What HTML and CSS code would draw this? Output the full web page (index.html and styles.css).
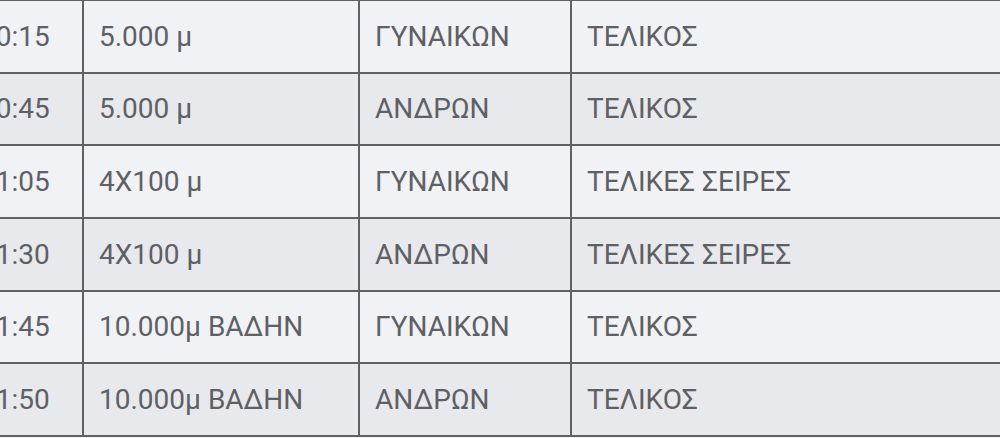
FILE: index.html
```html
<!DOCTYPE html>
<html lang="el">
<head>
<meta charset="utf-8">
<title>Πρόγραμμα</title>
<link rel="stylesheet" href="styles.css">
</head>
<body>
<table class="schedule">
  <colgroup>
    <col class="c-time">
    <col class="c-event">
    <col class="c-cat">
    <col class="c-phase">
  </colgroup>
  <tbody>
    <tr><td>20:15</td><td>5.000 μ</td><td>ΓΥΝΑΙΚΩΝ</td><td>ΤΕΛΙΚΟΣ</td></tr>
    <tr><td>20:45</td><td>5.000 μ</td><td>ΑΝΔΡΩΝ</td><td>ΤΕΛΙΚΟΣ</td></tr>
    <tr><td>21:05</td><td>4Χ100 μ</td><td>ΓΥΝΑΙΚΩΝ</td><td>ΤΕΛΙΚΕΣ ΣΕΙΡΕΣ</td></tr>
    <tr><td>21:30</td><td>4Χ100 μ</td><td>ΑΝΔΡΩΝ</td><td>ΤΕΛΙΚΕΣ ΣΕΙΡΕΣ</td></tr>
    <tr><td>21:45</td><td>10.000μ ΒΑΔΗΝ</td><td>ΓΥΝΑΙΚΩΝ</td><td>ΤΕΛΙΚΟΣ</td></tr>
    <tr><td>21:50</td><td>10.000μ ΒΑΔΗΝ</td><td>ΑΝΔΡΩΝ</td><td>ΤΕΛΙΚΟΣ</td></tr>
  </tbody>
</table>
</body>
</html>
```
FILE: styles.css
```css
html, body {
  margin: 0;
  padding: 0;
  background: #f1f2f6;
  overflow: hidden;
}
.schedule {
  border-collapse: collapse;
  table-layout: fixed;
  width: 1300px;
  margin-top: -1px;
  margin-left: -37px;
  font-family: Roboto, "Noto Sans", sans-serif;
  font-size: 28px;
  color: #5f6063;
}
.c-time { width: 119px; }
.c-event { width: 276px; }
.c-cat { width: 212px; }
.c-phase { width: 693px; }
.schedule td {
  border: 2px solid #616161;
  height: 72.67px;
  box-sizing: border-box;
  padding: 0 15px;
  vertical-align: middle;
  white-space: nowrap;
  line-height: 1.2;
}
.schedule tr:nth-child(odd) td { background: #f1f2f6; }
.schedule tr:nth-child(even) td { background: #e8e9ed; }
```
